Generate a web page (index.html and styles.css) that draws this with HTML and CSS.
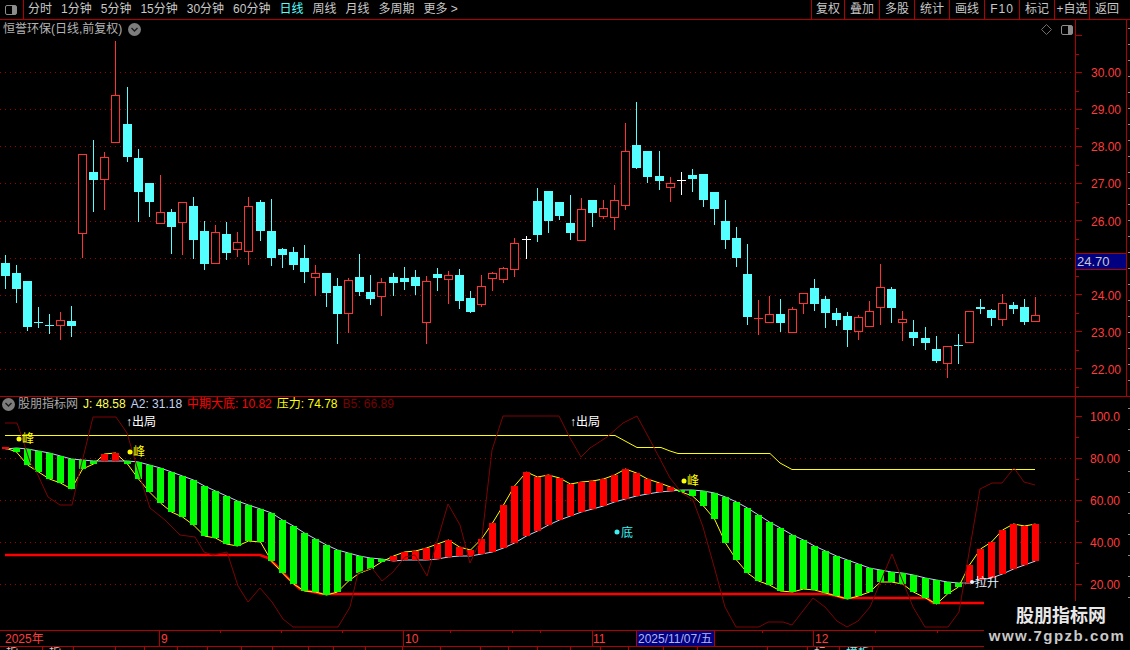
FILE: index.html
```html
<!DOCTYPE html>
<html lang="zh-CN">
<head>
<meta charset="utf-8">
<title>恒誉环保 日线</title>
<link rel="stylesheet" href="styles.css">
</head>
<body>
<div class="app">
  <header class="toolbar">
    <div class="panel-toggle">
      <svg class="toggle-icon" width="12" height="10" viewBox="0 0 12 10"><rect x="0.5" y="0.5" width="11" height="9" rx="1.5" class="icon-frame"/><rect x="7" y="1" width="4" height="8" class="icon-fill"/></svg>
    </div>
    <nav class="periods">
      <span>分时</span><span>1分钟</span><span>5分钟</span><span>15分钟</span><span>30分钟</span><span>60分钟</span>
      <span class="active">日线</span><span>周线</span><span>月线</span><span>多周期</span><span class="more">更多 &gt;</span>
    </nav>
    <nav class="actions">
      <span>复权</span><span>叠加</span><span>多股</span><span>统计</span><span>画线</span><span>F10</span><span>标记</span><span>+自选</span><span>返回</span>
    </nav>
  </header>

  <section class="panel upper">
    <div class="plot">
      <div class="chart-title">
        <span class="title-text">恒誉环保(日线,前复权)</span>
        <svg class="chevron" width="13" height="13" viewBox="0 0 13 13"><circle cx="6.5" cy="6.5" r="6.5"/><path d="M3.5 5 L6.5 8 L9.5 5"/></svg>
        <span class="title-tools">
          <svg width="11" height="11" viewBox="0 0 11 11"><path class="diamond" d="M5.5 0.5 L10.5 5.5 L5.5 10.5 L0.5 5.5 Z"/></svg>
          <svg width="12" height="10" viewBox="0 0 12 10"><rect x="0.5" y="0.5" width="11" height="9" rx="1.5" class="icon-frame"/><rect x="7" y="1" width="4" height="8" class="icon-fill"/></svg>
        </span>
      </div>
      <svg id="candles" class="chart-svg" width="1075" height="376" viewBox="0 20 1075 376"></svg>
    </div>
    <svg id="priceAxis" class="axis-svg" width="55" height="376" viewBox="1075 20 55 376"></svg>
  </section>

  <section class="panel lower">
    <div class="plot">
      <div class="legend">
        <svg class="chevron" width="13" height="13" viewBox="0 0 13 13"><circle cx="6.5" cy="6.5" r="6.5"/><path d="M3.5 5 L6.5 8 L9.5 5"/></svg>
        <span class="lg-name">股朋指标网</span>
        <span class="lg-j">J: 48.58</span>
        <span class="lg-a2">A2: 31.18</span>
        <span class="lg-bottom">中期大底: 10.82</span>
        <span class="lg-press">压力: 74.78</span>
        <span class="lg-b5">B5: 66.89</span>
      </div>
      <svg id="indicator" class="chart-svg" width="1075" height="233" viewBox="0 397 1075 233"></svg>
    </div>
    <svg id="indAxis" class="axis-svg" width="55" height="233" viewBox="1075 397 55 233"></svg>
  </section>

  <svg id="timeAxis" class="time-svg" width="1130" height="17" viewBox="0 630 1130 17"></svg>
  <footer id="tabs" class="tabs"></footer>

  <aside class="watermark">
    <div class="wm-title">股朋指标网</div>
    <div class="wm-url">www.7gpzb.com</div>
  </aside>
</div>
<script src="script.js"></script>
</body>
</html>
```
FILE: styles.css
```css
* { box-sizing: border-box; }
html, body { margin: 0; padding: 0; background: #000; }
body { font-family: "Liberation Sans", "Noto Sans CJK SC", sans-serif; font-size: 12px; color: #c8c8c8; }
.app { position: relative; width: 1130px; height: 650px; overflow: hidden; background: #000; display: flex; flex-direction: column; }

.toolbar { height: 20px; flex: none; display: flex; align-items: stretch; border-bottom: 1px solid #b00000; line-height: 19px; }
.panel-toggle { width: 24px; flex: none; border-right: 1px solid #b00000; display: flex; align-items: center; justify-content: center; padding-right: 1px; }
.periods { display: flex; gap: 9px; padding-left: 4px; white-space: nowrap; }
.periods .active { color: #54ffff; }
.actions { margin-left: auto; display: flex; margin-right: 6px; }
.actions span { width: 35px; text-align: center; border-left: 1px solid #b00000; white-space: nowrap; }
.actions span:nth-child(1) { width: 33px; }
.actions span:nth-child(6) { letter-spacing: 1px; }
.toggle-icon { display: block; }
.icon-frame { fill: none; stroke: #8c8c8c; }
.icon-fill { fill: #8c8c8c; }

.panel { display: flex; flex: none; }
.upper { height: 377px; border-bottom: 1px solid #b00000; }
.lower { height: 233px; }
.plot { position: relative; width: 1075px; flex: none; }
.chart-svg, .axis-svg, .time-svg { display: block; flex: none; }

.chart-title { position: absolute; left: 3px; right: 0; top: 0; height: 19px; display: flex; align-items: center; color: #b4b4b4; line-height: 19px; }
.title-text { white-space: nowrap; }
.chevron { margin-left: 6px; flex: none; }
.chevron circle { fill: #7d7d7d; }
.chevron path { fill: none; stroke: #1c1c1c; stroke-width: 1.4; }
.title-tools { margin-left: auto; margin-right: 2px; display: flex; align-items: center; gap: 9px; }
.diamond { fill: none; stroke: #6e6e6e; }

.legend { position: absolute; left: 2px; top: 0; height: 15px; display: flex; align-items: center; gap: 5px; white-space: nowrap; line-height: 15px; }
.legend .chevron { margin-left: 0; margin-right: -2px; }
.lg-name { color: #a8a8a8; }
.lg-j { color: #ffff54; }
.lg-a2 { color: #c4d4f0; }
.lg-bottom { color: #ff0000; }
.lg-press { color: #ffff00; }
.lg-b5 { color: #780000; }

svg text { font-family: "Liberation Sans", "Noto Sans CJK SC", sans-serif; font-size: 12px; }
.grid { stroke: #a00000; stroke-width: 1; stroke-dasharray: 1 4; fill: none; }
.wick { stroke-width: 1; }
.line-b5 { fill: none; stroke: #7c0404; stroke-width: 1; }
.line-press { fill: none; stroke: #ffff00; stroke-width: 1; }
.line-j { fill: none; stroke: #ffff00; stroke-width: 1; }
.line-a2 { fill: none; stroke: #c4d4f0; stroke-width: 1; }
.line-base { fill: none; stroke: #ff0000; stroke-width: 2.6; }
.axis-line { stroke: #b00000; stroke-width: 1; fill: none; shape-rendering: crispEdges; }
.axis-label { fill: #ff3c3c; }
.axis-scrap { stroke: #8c8c8c; stroke-width: 1; shape-rendering: crispEdges; }
.price-box { fill: #000080; stroke: #b00000; shape-rendering: crispEdges; }
.price-text { fill: #c8c8c8; font-size: 13px !important; }
.mark-peak { fill: #ffff00; }
.mark-exit { fill: #ffffff; }
.mark-low { fill: #3cf0f0; }
.mark-up { fill: #e4f4ff; }

.time-label { fill: #ff3c3c; }
.date-box { fill: #000080; stroke: #b00000; shape-rendering: crispEdges; }
.date-text { fill: #b4b4f0; }
.time-line { stroke: #b00000; stroke-width: 1; shape-rendering: crispEdges; }

.tabs { flex: none; height: 3px; overflow: hidden; display: flex; line-height: 12px; color: #c8c8c8; }
.tab { flex: none; height: 3px; border-right: 1px solid #b00000; padding-left: 6px; overflow: hidden; white-space: nowrap; }
.tab-on { color: #54ffff; }

.watermark { position: absolute; left: 984px; top: 601px; width: 146px; height: 49px; background: #000; display: flex; flex-direction: column; align-items: center; }
.wm-title { color: #e8e8e8; font-family: "Noto Sans CJK SC", sans-serif; font-size: 18px; font-weight: 700; line-height: 24px; margin-top: 1px; margin-left: 8px; }
.wm-url { color: #c8c8c8; font-family: "Liberation Sans", sans-serif; font-size: 15px; font-weight: 700; letter-spacing: 1.5px; line-height: 18px; margin-top: 1px; white-space: nowrap; }
```
FILE: script.js
```js
(function () {
  var NS = 'http://www.w3.org/2000/svg';
  function el(parent, tag, attrs, text) {
    var n = document.createElementNS(NS, tag);
    for (var k in attrs) n.setAttribute(k, attrs[k]);
    if (text != null) n.textContent = text;
    parent.appendChild(n);
    return n;
  }
  function xAt(i) { return 5 + 11 * i + Math.floor((i + 1) / 12); }

  /* type, high, open-top, open-bottom, low (in chart pixels) */
  var K = [
    ['c',255,263,276,288],['c',265,273,289,302],['c',281,281,327,330],['c',307,322,322,327],['c',314,325,325,333],
    ['r',312,320,325,339],['c',306,321,326,336],['r',154,154,233,257],['c',140,172,180,211],['r',152,157,179,209],
    ['r',41,95,142,142],['c',87,124,157,161],['c',149,158,192,221],['c',183,183,202,216],['r',175,212,223,223],
    ['c',209,212,227,253],['r',202,202,222,254],['c',197,206,240,258],['c',221,231,264,269],['r',225,232,263,263],
    ['c',222,234,253,259],['r',232,242,249,256],['r',197,206,251,264],['c',200,202,231,240],['c',199,231,258,265],
    ['c',248,249,255,267],['c',247,252,265,269],['c',245,258,272,282],['r',265,273,277,295],['c',273,273,293,306],
    ['c',278,286,314,343],['r',278,280,313,332],['c',254,277,292,295],['c',275,292,299,304],['r',278,282,296,315],
    ['c',273,277,283,295],['c',267,278,282,289],['c',270,277,286,294],['r',276,281,322,343],['c',268,274,278,290],
    ['r',271,275,279,303],['c',269,275,301,308],['c',291,298,312,312],['r',275,286,304,306],['r',272,273,278,290],
    ['r',267,268,279,282],['r',238,243,269,276],['w',236,239,239,258],['c',188,201,235,241],['c',191,191,221,232],
    ['c',202,202,216,219],['c',195,223,233,239],['r',198,209,240,240],['c',200,200,213,226],['r',200,208,216,218],
    ['r',185,200,217,229],['r',123,151,205,209],['c',102,145,168,168],['c',151,151,177,182],['c',151,176,181,189],
    ['r',177,183,187,201],['w',172,180,180,194],['c',169,175,179,191],['c',174,174,200,206],['c',192,192,209,224],
    ['c',200,221,240,248],['c',227,238,258,266],['c',244,274,317,324],['r',300,318,318,334],['r',296,314,322,322],
    ['c',299,314,323,331],['r',307,309,332,332],['r',293,293,303,313],['c',279,288,304,310],['c',296,299,313,327],
    ['c',308,313,320,325],['c',312,316,330,346],['r',315,317,331,339],['r',301,311,326,326],['r',264,287,307,324],
    ['c',287,289,308,322],['r',311,319,322,340],['c',320,332,338,345],['c',327,338,343,349],['c',336,349,361,362],
    ['r',346,346,363,377],['c',334,345,345,363],['r',311,311,342,342],['c',299,307,309,313],['c',309,310,318,325],
    ['r',294,303,319,325],['c',302,305,309,313],['c',299,307,322,324],['r',297,315,321,321]
  ];
  var COL = { c: '#54ffff', r: '#ff3232', w: '#ffffff' };

  var upper = document.getElementById('candles');
  [72.5, 109.5, 146.5, 183.5, 221.5, 258.5, 295.5, 332.5, 369.5].forEach(function (y) {
    el(upper, 'line', { x1: 0, x2: 1075, y1: y, y2: y, 'class': 'grid' });
  });
  var gk = el(upper, 'g', { 'shape-rendering': 'crispEdges' });
  K.forEach(function (k, i) {
    var x = xAt(i), t = k[0], c = COL[t];
    el(gk, 'line', { x1: x + .5, x2: x + .5, y1: k[1], y2: k[4] + 1, stroke: c, 'class': 'wick' });
    if (k[2] === k[3]) {
      el(gk, 'rect', { x: x - 4, y: k[2], width: 9, height: 1, fill: c });
    } else if (t === 'r') {
      el(gk, 'rect', { x: x - 3.5, y: k[2] + .5, width: 8, height: k[3] - k[2], fill: '#000', stroke: c });
    } else {
      el(gk, 'rect', { x: x - 4, y: k[2], width: 9, height: k[3] - k[2], fill: c });
    }
  });

  /* price axis */
  var pa = document.getElementById('priceAxis');
  el(pa, 'line', { x1: 1075.5, x2: 1075.5, y1: 20, y2: 396, 'class': 'axis-line' });
  el(pa, 'line', { x1: 1126.5, x2: 1126.5, y1: 20, y2: 396, 'class': 'axis-line' });
  var prices = [[72, '30.00'], [109, '29.00'], [146, '28.00'], [183, '27.00'], [221, '26.00'], [295, '24.00'], [332, '23.00'], [369, '22.00']];
  prices.forEach(function (p) {
    el(pa, 'text', { x: 1091, y: p[0] + 5, 'class': 'axis-label' }, p[1]);
  });
  for (var t = 35; t < 395; t += 18.5) {
    var ty = Math.round(t) + .5, major = Math.abs(((t - 35) / 37) % 1) < .01;
    el(pa, 'line', { x1: 1076, x2: major ? 1082 : 1079, y1: ty, y2: ty, 'class': 'axis-line' });
  }
  for (var s = 28; s < 396; s += 16) {
    el(pa, 'line', { x1: 1128, x2: 1130, y1: s + .5, y2: s + .5, 'class': 'axis-scrap' });
  }
  el(pa, 'rect', { x: 1075.5, y: 253.5, width: 51, height: 16, 'class': 'price-box' });
  el(pa, 'text', { x: 1077, y: 266, 'class': 'price-text' }, '24.70');

  /* indicator bars: top, bottom, colour */
  var B = [
    [448,449,'r'],[448,452,'g'],[449,465,'g'],[451,472,'g'],[453,479,'g'],[456,483,'g'],[459,489,'g'],[460,469,'g'],[461,464,'g'],
    [454,461,'r'],[453,461,'r'],[461,464,'g'],[462,479,'g'],[465,492,'g'],[468,503,'g'],[472,512,'g'],[476,517,'g'],[480,525,'g'],
    [486,536,'g'],[491,538,'g'],[496,544,'g'],[501,546,'g'],[505,541,'g'],[509,542,'g'],[513,561,'g'],[520,573,'g'],[526,584,'g'],
    [533,591,'g'],[539,592,'g'],[545,595,'g'],[550,592,'g'],[553,581,'g'],[556,573,'g'],[558,569,'g'],[559,562,'g'],
    [556,561,'r'],[552,560,'r'],[551,560,'r'],[548,560,'r'],[544,559,'r'],[540,557,'r'],[547,556,'r'],[550,556,'r'],[539,554,'r'],
    [523,552,'r'],[505,548,'r'],[486,543,'r'],[472,536,'r'],[477,531,'r'],[475,525,'r'],[478,520,'r'],[484,516,'r'],[482,512,'r'],
    [481,509,'r'],[479,506,'r'],[475,502,'r'],[469,499,'r'],[473,496,'r'],[479,494,'r'],[483,492,'r'],[487,491,'r'],
    [490,492,'g'],[490,496,'g'],[491,506,'g'],[493,519,'g'],[497,543,'g'],[502,560,'g'],[508,573,'g'],[515,581,'g'],[522,585,'g'],
    [528,591,'g'],[535,592,'g'],[540,589,'g'],[546,590,'g'],[551,593,'g'],[556,596,'g'],[560,599,'g'],[564,596,'g'],[568,592,'g'],
    [570,582,'g'],[572,582,'g'],[573,584,'g'],[575,592,'g'],[578,598,'g'],[580,604,'g'],[582,594,'g'],[583,587,'g'],
    [565,583,'r'],[549,580,'r'],[542,578,'r'],[530,574,'r'],[524,569,'r'],[526,565,'r'],[524,561,'r']
  ];

  var ind = document.getElementById('indicator');
  [458.5, 500.5, 542.5, 584.5].forEach(function (y) {
    el(ind, 'line', { x1: 0, x2: 1075, y1: y, y2: y, 'class': 'grid' });
  });
  function pts(a) { return a.map(function (p) { return p[0] + ',' + p[1]; }).join(' '); }

  el(ind, 'polyline', { 'class': 'line-press', points: pts([[5,435.5],[615,435.5],[637,447.5],[661,447.5],[670,451],[678,453.5],[770,453.5],[780,463],[792,469.5],[1035,469.5]]) });
  el(ind, 'polyline', { 'class': 'line-base', points: pts([[5,555],[260,555],[268,558],[278,567],[288,578],[300,589],[322,594],[827,594],[837,596],[843,598],[927,598],[933,603],[1000,603]]) });

  var jPts = [], aPts = [];
  B.forEach(function (b, i) {
    var cx = xAt(i) + .5, green = b[2] === 'g';
    aPts.push([cx, green ? b[0] : b[1]]);
    jPts.push([cx, green ? b[1] : b[0]]);
  });
  el(ind, 'polyline', { 'class': 'line-a2', points: pts(aPts) });
  el(ind, 'polyline', { 'class': 'line-j', points: pts(jPts) });

  var gb = el(ind, 'g', { 'shape-rendering': 'crispEdges' });
  B.forEach(function (b, i) {
    var x = xAt(i);
    if (i === 0) { el(gb, 'rect', { x: 2, y: 447, width: 7, height: 2, fill: '#ff0000' }); return; }
    el(gb, 'rect', { x: x - 3, y: b[0], width: 7, height: b[1] - b[0], fill: b[2] === 'g' ? '#00ff00' : '#ff0000' });
  });

  el(ind, 'polyline', { 'class': 'line-b5', points: pts([
    [5,423],[17,423],[23,440],[30,462],[37,473],[48,497],[60,505],[72,505],[80,470],[93,417],[116,417],[127,433],[132,450],[140,477],[150,508],
    [165,520],[180,535],[195,537],[204,552],[213,555],[227,552],[238,586],[248,602],[260,588],[272,602],[283,619],[293,627],[338,627],[350,607],
    [358,573],[372,568],[382,581],[393,572],[405,557],[415,555],[427,576],[448,504],[460,525],[470,563],[482,537],[492,450],[503,416],[559,416],
    [570,438],[581,457],[590,448],[607,437],[623,423],[637,416],[650,440],[670,478],[682,493],[693,500],[703,527],[715,570],[725,607],[736,627],
    [759,627],[768,622],[783,622],[792,625],[813,598],[825,607],[837,621],[847,627],[858,621],[870,607],[892,554],[913,607],[925,627],[948,627],
    [959,612],[970,547],[980,489],[992,483],[1002,483],[1014,468],[1024,482],[1035,485]
  ]) });

  [[19, 439], [130, 452], [684, 481]].forEach(function (m) {
    el(ind, 'circle', { cx: m[0], cy: m[1], r: 2.5, 'class': 'mark-peak' });
    el(ind, 'text', { x: m[0] + 3, y: m[1] + 4, 'class': 'mark-peak' }, '峰');
  });
  [[126, 426], [570, 426]].forEach(function (m) {
    el(ind, 'text', { x: m[0], y: m[1], 'class': 'mark-exit' }, '↑出局');
  });
  el(ind, 'circle', { cx: 617, cy: 532, r: 2.5, 'class': 'mark-low' });
  el(ind, 'text', { x: 621, y: 537, 'class': 'mark-low' }, '底');
  el(ind, 'circle', { cx: 972, cy: 582, r: 2, 'class': 'mark-up' });
  el(ind, 'text', { x: 975, y: 587, 'class': 'mark-up' }, '拉升');

  /* indicator axis */
  var ia = document.getElementById('indAxis');
  el(ia, 'line', { x1: 1075.5, x2: 1075.5, y1: 397, y2: 630, 'class': 'axis-line' });
  [[416, '100.0'], [458, '80.00'], [500, '60.00'], [542, '40.00'], [584, '20.00']].forEach(function (p) {
    el(ia, 'line', { x1: 1076, x2: 1082, y1: p[0] + .5, y2: p[0] + .5, 'class': 'axis-line' });
    el(ia, 'line', { x1: 1076, x2: 1079, y1: p[0] + 21.5, y2: p[0] + 21.5, 'class': 'axis-line' });
    el(ia, 'text', { x: 1090, y: p[0] + 5, 'class': 'axis-label' }, p[1]);
  });
  for (var q = 408; q < 600; q += 21) {
    el(ia, 'line', { x1: 1128, x2: 1130, y1: q + .5, y2: q + .5, 'class': 'axis-scrap' });
  }

  /* time axis */
  var ta = document.getElementById('timeAxis');
  el(ta, 'line', { x1: 0, x2: 1130, y1: 630.5, y2: 630.5, 'class': 'time-line' });
  el(ta, 'line', { x1: 0, x2: 1130, y1: 646.5, y2: 646.5, 'class': 'time-line' });
  [[5, '2025年'], [161, '9'], [405, '10'], [593, '11'], [815, '12']].forEach(function (p) {
    el(ta, 'text', { x: p[0], y: 643, 'class': 'time-label' }, p[1]);
  });
  [159, 403, 592, 813].forEach(function (x) {
    el(ta, 'line', { x1: x + .5, x2: x + .5, y1: 631, y2: 646, 'class': 'time-line' });
  });
  [220, 281, 342, 450, 512, 540, 663, 762, 875, 937, 998].forEach(function (x) {
    el(ta, 'line', { x1: x + .5, x2: x + .5, y1: 631, y2: 633, 'class': 'time-line' });
  });
  el(ta, 'rect', { x: 636.5, y: 630.5, width: 78, height: 16, 'class': 'date-box' });
  el(ta, 'text', { x: 638, y: 643, 'class': 'date-text' }, '2025/11/07/五');

  /* tab strip, cut off by the bottom of the window */
  var edges = [42,73,115,144,177,207,241,272,308,333,365,402,440,480,508,537,570,600,628,663,697,767,807,839,872,984];
  var labels = { 0: '指', 1: '指', 23: '标', 24: '模板' };
  var tabs = document.getElementById('tabs');
  var prev = 0;
  edges.forEach(function (e, i) {
    var d = document.createElement('div');
    d.className = 'tab' + (i === 24 ? ' tab-on' : '');
    d.style.width = (e + 1 - prev) + 'px';
    d.textContent = labels[i] || '';
    tabs.appendChild(d);
    prev = e + 1;
  });
})();
```
